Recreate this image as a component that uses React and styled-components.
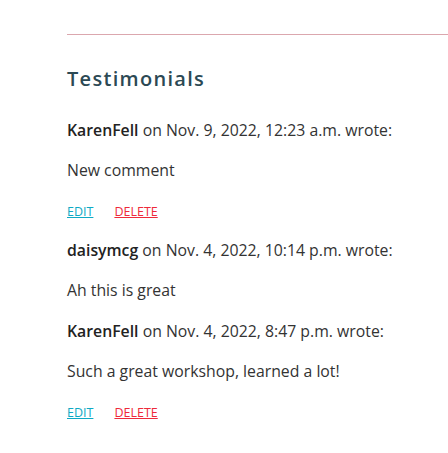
import styled, { createGlobalStyle } from "styled-components";

const GlobalStyle = createGlobalStyle`
  body {
    margin: 0;
    background: #fff;
    font-family: "Open Sans", "Noto Sans", sans-serif;
    color: #333;
  }
`;

const Section = styled.section`
  padding: 34px 0 0 67px;
`;

const Rule = styled.hr`
  margin: 0;
  border: 0;
  border-top: 1px solid #dba7ae;
`;

const Title = styled.h2`
  margin: 32px 0 27px;
  font-size: 20px;
  font-weight: 600;
  letter-spacing: 1.3px;
  line-height: 24px;
  color: #2c4954;
`;

const Comment = styled.div`
  display: flex;
  flex-direction: column;
`;

const Meta = styled.p`
  margin: 0 0 16px;
  font-size: 15.8px;
  line-height: 24px;
`;

const Author = styled.strong`
  font-weight: 600;
  color: #222;
`;

const Body = styled.p`
  margin: 0 0 17px;
  font-size: 15.8px;
  line-height: 24px;
`;

const Actions = styled.div`
  display: flex;
  gap: 21px;
  height: 24px;
  align-items: center;
  margin-bottom: 15px;
`;

const Action = styled.a`
  font-size: 12.5px;
  text-decoration: underline;
  color: ${(p) => (p.$danger ? "#ee2a3a" : "#0fa9c4")};
  cursor: pointer;
`;

const comments = [
  { author: "KarenFell", date: "Nov. 9, 2022, 12:23 a.m.", text: "New comment", own: true },
  { author: "daisymcg", date: "Nov. 4, 2022, 10:14 p.m.", text: "Ah this is great" },
  { author: "KarenFell", date: "Nov. 4, 2022, 8:47 p.m.", text: "Such a great workshop, learned a lot!", own: true },
];

const App = () => {
  return (
    <Section>
      <GlobalStyle />
      <Rule />
      <Title>Testimonials</Title>
      {comments.map((c, i) => (
        <Comment key={i}>
          <Meta>
            <Author>{c.author}</Author> on {c.date} wrote:
          </Meta>
          <Body>{c.text}</Body>
          {c.own && (
            <Actions>
              <Action>EDIT</Action>
              <Action $danger>DELETE</Action>
            </Actions>
          )}
        </Comment>
      ))}
    </Section>
  );
};

export default App;
